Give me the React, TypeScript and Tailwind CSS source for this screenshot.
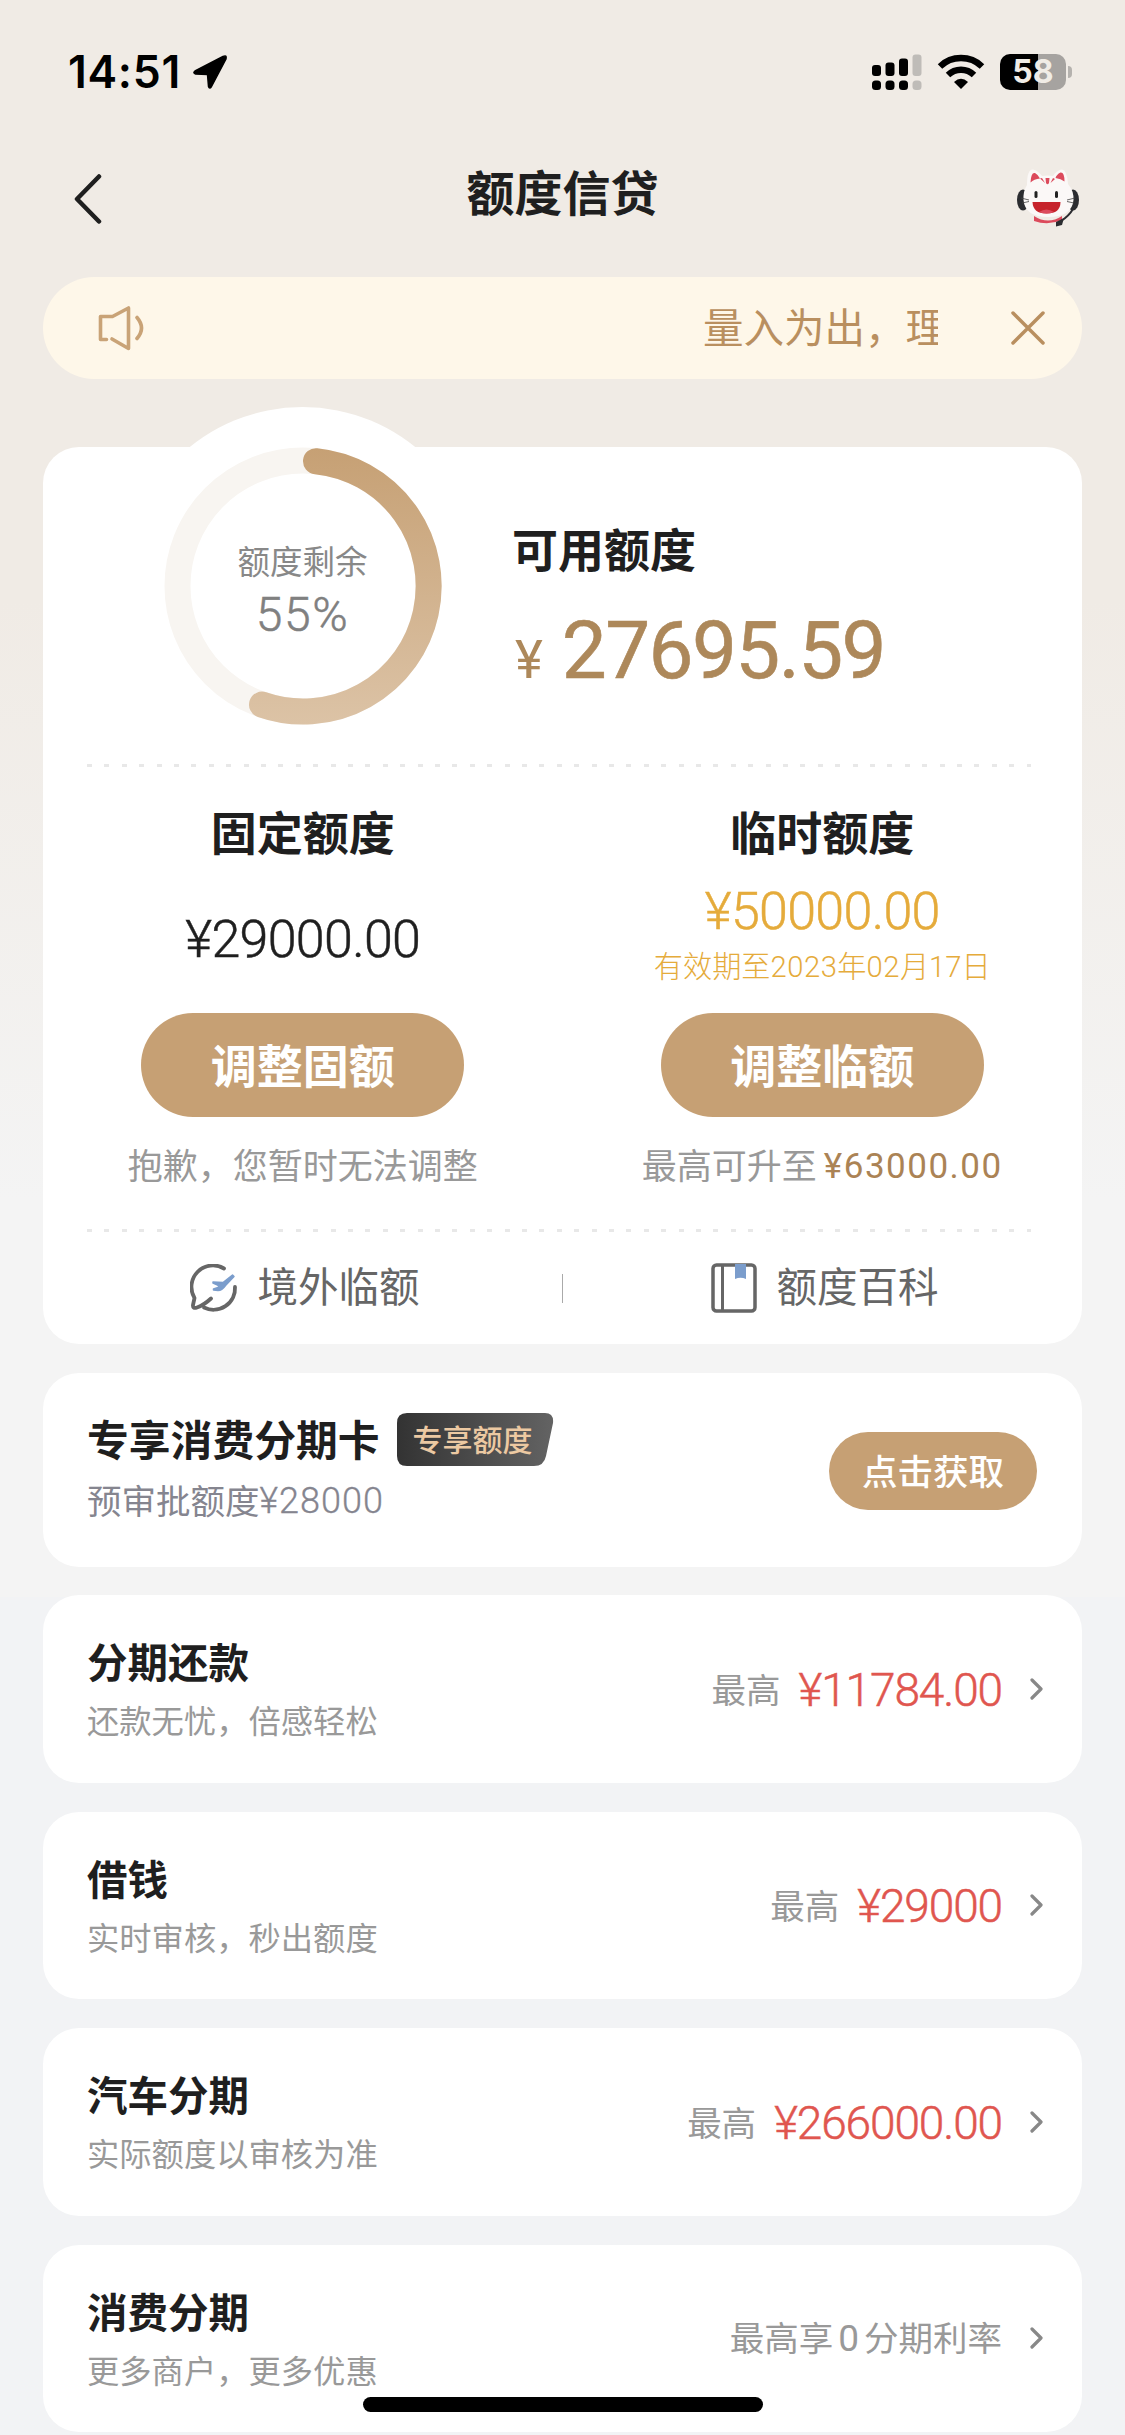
import type { ReactNode } from "react";

const CJK = "font-['Noto_Sans_CJK_SC',sans-serif]";
const NUM = "font-[Roboto,'Noto_Sans_CJK_SC',sans-serif]";

const services = [
  { title: "分期还款", desc: "还款无忧，倍感轻松", prefix: "最高", amount: "¥11784.00" },
  { title: "借钱", desc: "实时审核，秒出额度", prefix: "最高", amount: "¥29000" },
  { title: "汽车分期", desc: "实际额度以审核为准", prefix: "最高", amount: "¥266000.00" },
  {
    title: "消费分期",
    desc: "更多商户，更多优惠",
    prefix: (
      <>
        最高享<span className={`mx-[5px] text-[37px] ${NUM}`}>0</span>分期利率
      </>
    ),
  },
];

const StatusBar = () => (
  <div className="flex h-[143px] justify-between pt-[49px] pr-[53px] pl-[68px]">
    <div className="flex h-[46px] items-center gap-[12px]">
      <span className="w-[112px] font-[Inter,sans-serif] text-[44.5px] leading-[46px] font-semibold tracking-[0.7px] whitespace-nowrap text-black">
        14:51
      </span>
      <svg width="36" height="36" viewBox="0 0 36 36">
        <path
          d="M31 2.500 L3 17 Q0.500 19 3.500 20 L15.500 20.500 L16.500 32.500 Q17.500 35.500 19.500 32.500 L34 5 Q35 0.500 31 2.500Z"
          fill="#000"
          stroke="#000"
          strokeWidth="1.500"
          strokeLinejoin="round"
        />
      </svg>
    </div>
    <div className="flex h-[46px] items-center">
      <svg width="50" height="36" viewBox="0 0 50 36">
        <rect x="0" y="11" width="9" height="11" rx="3" />
        <rect x="13.5" y="8.500" width="9" height="13.500" rx="3" />
        <rect x="27" y="4.500" width="9" height="17.500" rx="3" />
        <rect x="40.500" y="0.500" width="9" height="21.500" rx="3" fill="#bfbcb8" />
        <rect x="0" y="26.500" width="9" height="9.500" rx="3.500" />
        <rect x="13.500" y="26.500" width="9" height="9.500" rx="3.500" />
        <rect x="27" y="26.500" width="9" height="9.500" rx="3.500" />
        <rect x="40.500" y="26.500" width="9" height="9.500" rx="3.500" fill="#bfbcb8" />
      </svg>
      <svg className="ml-[15px]" width="48" height="36" viewBox="0 0 48 36" fill="none" stroke="#000">
        <path d="M3 12.500 A30.500 30.500 0 0 1 45 12.500" strokeWidth="6.500" />
        <path d="M11 21 A19 19 0 0 1 37 21" strokeWidth="6.500" />
        <path d="M24 35 L17 28 Q24 21.500 31 28 Z" fill="#000" stroke="none" />
      </svg>
      <div className="ml-[15px] flex h-9 w-[66px] items-center justify-center rounded-[10px] bg-[linear-gradient(90deg,#000_57%,#a6a3a0_57%)]">
        <span className="font-[Inter,sans-serif] text-[32px] leading-9 font-bold text-[#f0ece6]">58</span>
      </div>
      <div className="ml-[2px] h-3 w-1 rounded-r-full bg-[#b5b2ae]" />
    </div>
  </div>
);

const CatAvatar = () => (
  <svg width="62" height="58" viewBox="0 0 62 58">
    <ellipse cx="6" cy="31" rx="6" ry="10.500" fill="#2b2c30" />
    <ellipse cx="56" cy="31" rx="6" ry="10.500" fill="#2b2c30" />
    <path d="M17 47 Q31 56 45 47 L45 51 Q31 57 17 52Z" fill="#dc4a5c" />
    <path
      d="M10 16 Q10 0 16 0.500 Q21 1.500 25 7 Q31 6 36 7 Q40 1 45 0.500 Q50 1 51 15 Q57 22 56.500 31 Q55 48 31 48 Q8 48 6.500 31 Q6 22 10 16Z"
      fill="#fbf8f7"
    />
    <path d="M13.500 13.500 Q14 3 18 4 Q21.500 6 23 9.500 Q17 10 13.500 13.500Z" fill="#dc4a5c" />
    <path d="M47.500 12.500 Q47.500 3 43.500 3.500 Q39.500 5.500 38.500 9 Q44 9.500 47.500 12.500Z" fill="#dc4a5c" />
    <path d="M28.500 9 H32.500 L32 14 Q30.500 16.500 29 14Z M23 9.500 L25 9 L28 14Z M36 9 L38 10 L33.500 14Z" fill="#dc4a5c" />
    <rect x="17.500" y="22" width="3" height="7" rx="1.500" fill="#222" />
    <rect x="38" y="22" width="3" height="7" rx="1.500" fill="#222" />
    <path d="M4 29 L12 31 M5 34 L12 32.500 M58 29 L50 31 M57 34 L50 32.500" stroke="#444" strokeWidth="0.800" />
    <path d="M15.500 33 H43.500 Q43.500 44.500 29.500 44.500 Q16 44.500 15.500 33Z" fill="#c6232b" />
    <path d="M22 43 Q29.500 38 37 43 Q29.500 46 22 43Z" fill="#dc4a5c" />
    <path d="M56 40 Q52 47 44 52" fill="none" stroke="#2b2c30" strokeWidth="2" />
    <path d="M39 53 L47 49 L45 56 L39 57.500Z" fill="#2b2c30" />
  </svg>
);

const NavBar = () => (
  <div className="flex h-[110px] items-center justify-between pr-[46px] pb-[22px] pl-[73px]">
    <svg className="mt-[23px]" width="35" height="50" viewBox="0 0 35 50" fill="none">
      <path d="M26 2.500 L4 25 L26 47.500" stroke="#1f1f1f" strokeWidth="4.500" strokeLinecap="round" strokeLinejoin="round" />
    </svg>
    <h1 className="mt-1.5 text-[48px] leading-[60px] font-bold text-[#1f1f1f]">额度信贷</h1>
    <div className="mt-[22px]">
      <CatAvatar />
    </div>
  </div>
);

const Notice = () => (
  <div className="mx-[43px] mt-[24px] flex h-[102px] items-center rounded-full bg-[#fef7e9] pr-[37px] pl-[55px]">
    <svg width="48" height="46" viewBox="0 0 48 46" fill="none" stroke="#c9a377" strokeWidth="3.600" strokeLinecap="round">
      <path d="M8.500 34.500 H2.500 V11.500 H14.500 L30.500 3 V43.500 L14 34" strokeLinejoin="round" />
      <path d="M39 12.500 Q48 23 39 33.500" />
    </svg>
    <div className="ml-auto w-[235px] overflow-hidden pb-1 text-[40.5px] leading-[56px] whitespace-nowrap text-[#b98f5f]">
      量入为出，理
    </div>
    <svg className="ml-[73px]" width="34" height="34" viewBox="0 0 34 34" fill="none" stroke="#b98f5f" strokeWidth="3.500">
      <path d="M2 2 L32 32 M32 2 L2 32" strokeLinecap="round" />
    </svg>
  </div>
);

const Gauge = () => (
  <div className="-mt-10 ml-[81px] flex size-[357px] shrink-0 items-center justify-center rounded-full bg-white">
    <div className="relative flex size-[278px] flex-col items-center justify-center pt-1.5">
      <svg className="absolute inset-0" width="278" height="278" viewBox="-139 -139 278 278" fill="none">
        <defs>
          <linearGradient id="ring" x1="0" y1="-139" x2="0" y2="139" gradientUnits="userSpaceOnUse">
            <stop offset="0" stopColor="#c6a074" />
            <stop offset="1" stopColor="#dcc3a6" />
          </linearGradient>
        </defs>
        <circle r="125.500" stroke="#f8f5f1" strokeWidth="26" />
        <path d="M13 -124.800 A125.500 125.500 0 1 1 -41 118.600" stroke="url(#ring)" strokeWidth="26" strokeLinecap="round" />
      </svg>
      <span className="text-[32.5px] leading-10 text-[#888]">额度剩余</span>
      <span
        className={`mt-[13px] text-[48px] leading-[44px] font-light tracking-[1.6px] text-[#808080] [-webkit-text-stroke:0.5px] ${NUM}`}
      >
        55%
      </span>
    </div>
  </div>
);

const DottedLine = () => (
  <div className="ml-[44px] h-[3px] w-[944px] bg-[repeating-linear-gradient(90deg,#e8e8e8_0_5px,transparent_5px_17.4px)]" />
);

const LimitButton = ({ children }: { children: ReactNode }) => (
  <button className="h-[104px] w-[323px] rounded-full bg-[#c6a074] pb-[5px] text-[46px] leading-[64px] font-bold text-white">
    {children}
  </button>
);

const QuotaCard = () => (
  <section className="mx-[43px] mt-[68px] h-[897px] rounded-[36px] bg-white">
    <div className="flex h-[317px] items-start">
      <Gauge />
      <div className="ml-[31px] pt-[70px]">
        <h2 className="text-[46px] leading-[60px] font-bold text-[#1f1f1f]">可用额度</h2>
        <div className={`mt-[34px] ml-[3px] flex items-baseline text-[#ad885a] ${NUM}`}>
          <span className="text-[53px] leading-[80px]">¥</span>
          <span className="ml-[19px] text-[80px] leading-[80px] tracking-[-1.600px] [-webkit-text-stroke:0.6px]">
            27695.59
          </span>
        </div>
      </div>
    </div>
    <DottedLine />
    <div className="grid h-[462px] grid-cols-2 text-center">
      <div className="flex flex-col items-center pt-[33px]">
        <h3 className="text-[46px] leading-[60px] font-bold text-[#1f1f1f]">固定额度</h3>
        <div
          className={`flex h-[153px] items-center pt-[7px] text-[52px] font-light tracking-[-0.700px] text-[#1f1f1f] [-webkit-text-stroke:0.5px] ${NUM}`}
        >
          ¥29000.00
        </div>
        <LimitButton>调整固额</LimitButton>
        <p className="mt-[23px] text-[35px] leading-[48px] text-[#999]">抱歉，您暂时无法调整</p>
      </div>
      <div className="flex flex-col items-center pt-[33px]">
        <h3 className="text-[46px] leading-[60px] font-bold text-[#1f1f1f]">临时额度</h3>
        <div className="flex h-[153px] flex-col items-center text-[#e5ab3b]">
          <span
            className={`mt-[24px] text-[52px] leading-[56px] font-light tracking-[-0.700px] [-webkit-text-stroke:0.5px] ${NUM}`}
          >
            ¥50000.00
          </span>
          <span className={`mt-[9px] text-[29.2px] leading-[36px] font-light whitespace-nowrap ${NUM}`}>
            有效期至<span className="tracking-[0.500px]">2023</span>年<span className="tracking-[0.500px]">02</span>月17日
          </span>
        </div>
        <LimitButton>调整临额</LimitButton>
        <p className="mt-[23px] flex gap-[7px] text-[35px] leading-[48px] text-[#999]">
          最高可升至
          <span className={`pt-[3px] tracking-[1.500px] text-[#ab8355] ${NUM}`}>¥63000.00</span>
        </p>
      </div>
    </div>
    <DottedLine />
    <div className="grid h-[112px] grid-cols-[1fr_1px_1fr] items-center text-[40.5px] leading-[56px] text-[#666]">
      <div className="flex items-center justify-center gap-5 pl-1">
        <svg width="48" height="48" viewBox="0 0 48 48" fill="none" stroke="#666" strokeWidth="3.800" strokeLinecap="round" strokeLinejoin="round">
          <path d="M34 4.500 A21.500 21.500 0 0 0 4.500 34 L3 41 Q2.500 45 7 43.500 Q14 41 21 34.500" />
          <path d="M45 23 A21.500 21.500 0 0 1 14 43.500" />
          <path
            d="M42.500 11 L44 12.500 L35.500 21.500 Q32 26.500 28 26.500 L23.500 26 L23.500 25 L29.500 23 L27.500 21 L23 19 L23 18 L33 18.500Z"
            fill="#7b9dcc"
            stroke="#7b9dcc"
            strokeWidth="1.500"
          />
        </svg>
        <span className="pb-[6px]">境外临额</span>
      </div>
      <div className="h-[29px] bg-[#aaa]" />
      <div className="flex items-center justify-center gap-5 pl-1">
        <svg width="46" height="50" viewBox="0 0 46 50" fill="none" stroke="#666" strokeWidth="3.500">
          <rect x="2" y="2" width="42" height="46" rx="3.500" />
          <path d="M11.500 2 V48" strokeWidth="3" />
          <path d="M24 1 H35 V16 Q29.500 13.500 24 16Z" fill="#7b9dcc" stroke="none" />
        </svg>
        <span className="pb-[6px]">额度百科</span>
      </div>
    </div>
  </section>
);

const ExclusiveCard = () => (
  <section className="mx-[43px] mt-[29px] flex h-[194px] items-center justify-between rounded-[36px] bg-white pr-[45px] pl-11">
    <div className="pb-1.5">
      <div className="flex items-center gap-[17px]">
        <h3 className="pb-1 text-[41.8px] leading-[52px] font-bold text-[#1f1f1f]">专享消费分期卡</h3>
        <div className="relative h-[53px] w-[157px]">
          <svg className="absolute inset-0" width="157" height="53" viewBox="0 0 157 53">
            <defs>
              <linearGradient id="badge">
                <stop offset="0" stopColor="#333" />
                <stop offset="1" stopColor="#636363" />
              </linearGradient>
            </defs>
            <path d="M10 0 H148 Q157 0 156 10 L149 43 Q147 53 137 53 H10 Q0 53 0 43 V10 Q0 0 10 0Z" fill="url(#badge)" />
          </svg>
          <span className="relative block pl-4 text-[30px] leading-[51px] font-medium text-[#ecc9a2]">专享额度</span>
        </div>
      </div>
      <p className="mt-[9px] flex text-[34.5px] leading-[44px] text-[#85858f]">
        预审批额度
        <span className={`pt-0.5 text-[36px] leading-[44px] font-light tracking-[1px] [-webkit-text-stroke:0.3px] ${NUM}`}>
          ¥28000
        </span>
      </p>
    </div>
    <button className="mt-0.5 h-[78px] w-[208px] rounded-full bg-[#c6a074] pb-0.5 text-[35.5px] leading-[60px] font-medium text-white">
      点击获取
    </button>
  </section>
);

type ServiceProps = { title: string; desc: string; prefix: ReactNode; amount?: string };

const ServiceCard = ({ title, desc, prefix, amount }: ServiceProps) => (
  <section className="mx-[43px] mt-[29px] flex h-[187.5px] items-center justify-between rounded-[36px] bg-white pr-[38px] pl-11">
    <div className="pb-[5px]">
      <h3 className="text-[40.5px] leading-[56px] font-bold text-[#1f1f1f]">{title}</h3>
      <p className="mt-[10px] text-[32.3px] leading-10 text-[#999]">{desc}</p>
    </div>
    <div className="flex items-center text-[34.500px] leading-[48px] text-[#999]">
      <span className="pb-[2px]">{prefix}</span>
      {amount && (
        <span
          className={`ml-[18px] pt-0.5 text-[46px] font-light tracking-[-1.100px] text-[#e0564f] [-webkit-text-stroke:0.5px] ${NUM}`}
        >
          {amount}
        </span>
      )}
      <svg className="ml-7" width="14" height="22" viewBox="0 0 14 22" fill="none">
        <path d="M2 2 L11 11 L2 20" stroke="#888" strokeWidth="3.200" strokeLinecap="round" strokeLinejoin="round" />
      </svg>
    </div>
  </section>
);

export default function App() {
  return (
    <div className={`relative h-[2435px] w-[1125px] overflow-hidden bg-[#f2f3f5] ${CJK}`}>
      <div className="h-[1597px] bg-[linear-gradient(180deg,#f0ebe5_0,#f0ebe5_600px,#f4f4f4_1200px)]">
        <StatusBar />
        <NavBar />
        <Notice />
        <QuotaCard />
        <ExclusiveCard />
      </div>
      <div className="-mt-[31px]">
        {services.map((service) => (
          <ServiceCard key={service.title} {...service} />
        ))}
      </div>
      <div className="absolute bottom-[23px] left-[363px] h-[15px] w-[400px] rounded-full bg-black" />
    </div>
  );
}
